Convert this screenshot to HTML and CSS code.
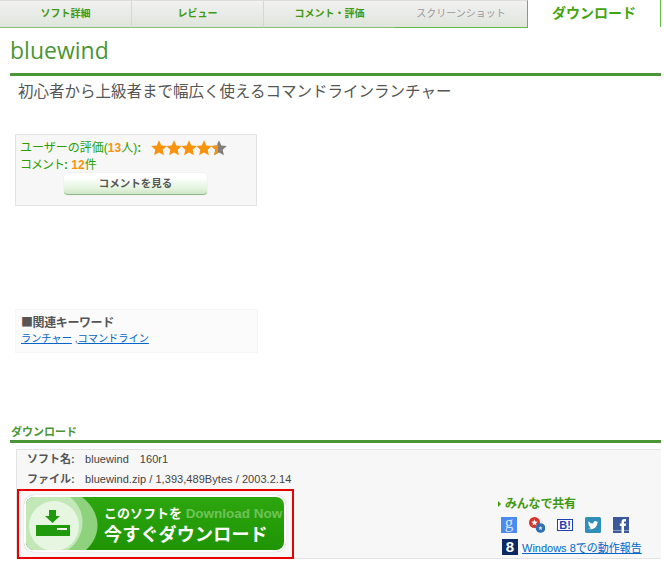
FILE: index.html
```html
<!DOCTYPE html>
<html lang="ja">
<head>
    <meta charset="UTF-8">
    <meta name="viewport" content="width=device-width, initial-scale=1.0">
    <title>bluewind - ダウンロード</title>
    <link rel="stylesheet" href="styles.css">
</head>
<body>
    <!-- Tabs -->
    <nav class="tabs">
        <a class="tab" href="#">ソフト詳細</a>
        <a class="tab" href="#">レビュー</a>
        <a class="tab" href="#">コメント・評価</a>
        <a class="tab tab-off" href="#">スクリーンショット</a>
        <a class="tab tab-active" href="#">ダウンロード</a>
    </nav>

    <main class="content">
        <h1 class="soft-name">bluewind</h1>
        <h2 class="soft-lead">初心者から上級者まで幅広く使えるコマンドラインランチャー</h2>

        <!-- Rating -->
        <section class="rating-box">
            <div class="rating-row">
                <span class="rating-label">ユーザーの評価(<b class="num">13</b>人)<b>:</b></span>
                <svg class="stars" width="76" height="16" viewBox="0 0 76 16">
                    <defs>
                        <polygon id="star" points="8,0.3 10.3,5.4 15.8,6 11.7,9.7 12.9,15.2 8,12.4 3.1,15.2 4.3,9.7 0.2,6 5.7,5.4"/>
                        <clipPath id="half"><rect x="60" y="0" width="7" height="16"/></clipPath>
                    </defs>
                    <use href="#star" fill="#f9930e"/>
                    <use href="#star" x="15" fill="#f9930e"/>
                    <use href="#star" x="30" fill="#f9930e"/>
                    <use href="#star" x="45" fill="#f9930e"/>
                    <use href="#star" x="60" fill="#808080"/>
                    <g clip-path="url(#half)"><use href="#star" x="60" fill="#f9930e"/></g>
                </svg>
            </div>
            <div class="comment-row"><span class="comment-word">コメント</span><b>:</b> <b class="num">12</b>件</div>
            <a class="comment-btn" href="#">コメントを見る</a>
        </section>

        <!-- Keywords -->
        <section class="keyword-box">
            <div class="keyword-title">■関連キーワード</div>
            <div class="keyword-links"><a href="#">ランチャー</a> ,<a href="#">コマンドライン</a></div>
        </section>

        <!-- Download -->
        <h3 class="dl-title">ダウンロード</h3>
        <section class="dl-box">
            <dl class="dl-info">
                <div class="dl-row"><dt>ソフト名:</dt><dd>bluewind　160r1</dd></div>
                <div class="dl-row"><dt>ファイル:</dt><dd>bluewind.zip / 1,393,489Bytes / 2003.2.14</dd></div>
            </dl>
            <div class="dl-bottom">
                <a class="dl-frame" href="#">
                    <span class="dl-btn">
                        <span class="dl-inner">
                            <svg class="dl-art" width="78" height="53" viewBox="0 0 78 53">
                                <path d="M0 0H56C76 16 76 38 60 53H0Z" fill="#8fd27d"/>
                                <path d="M0 0H44C62 14 60 40 42 53H0Z" fill="#c2e8b8"/>
                                <circle cx="28" cy="29" r="25" fill="#e6f6e1"/>
                                <path d="M23 13H30V19H34L26.5 26L19 19H23Z" fill="#1f9a0c"/>
                                <path d="M10 28H44V39H10Z" fill="#1f9a0c"/>
                                <path d="M31 31H41V33H31Z" fill="#fff"/>
                            </svg>
                            <span class="dl-text">
                                <span class="dl-line1">このソフトを <em>Download Now</em></span>
                                <span class="dl-line2">今すぐダウンロード</span>
                            </span>
                        </span>
                    </span>
                </a>
                <div class="share">
                    <div class="share-title">みんなで共有</div>
                    <div class="share-icons">
                        <svg width="16" height="16" viewBox="0 0 16 16"><rect width="16" height="16" fill="#4b8bf0"/><text class="icon-g" x="8" y="11" text-anchor="middle">g</text></svg>
                        <svg width="16" height="16" viewBox="0 0 16 16"><circle cx="5.5" cy="5.5" r="5.5" fill="#d8342c"/><circle cx="11.5" cy="11" r="4.8" fill="#2f6fb3"/><path d="M5.5 2.3L6.4 4.5 8.7 4.7 7 6.2 7.5 8.5 5.5 7.3 3.5 8.5 4 6.2 2.3 4.7 4.6 4.5Z" fill="#fff"/><path d="M11.5 8.8L12.1 10.3 13.7 10.4 12.5 11.4 12.9 13 11.5 12.2 10.1 13 10.5 11.4 9.3 10.4 10.9 10.3Z" fill="#d5e4f3"/></svg>
                        <svg width="16" height="16" viewBox="0 0 16 16"><rect x="0.5" y="2.5" width="15" height="11" fill="#fff" stroke="#1f40b8"/><text class="icon-b" x="8" y="12" text-anchor="middle">B!</text></svg>
                        <svg width="16" height="16" viewBox="0 0 16 16"><rect width="16" height="16" rx="1.5" fill="#2f8fb8"/><path d="M2.5 11.5C6.5 13.5 12 11.5 12.3 6L13.5 4.6 12 5C11 3.3 8 4 8.3 6.6C6.5 6.5 4.8 5.6 3.6 4.2C3 5.5 3.4 6.8 4.4 7.5L3.4 7.3C3.5 8.5 4.3 9.3 5.4 9.6L4.4 9.7C4.8 10.5 5.5 10.9 6.4 11C5.5 11.6 4 11.8 2.5 11.5Z" fill="#fff"/></svg>
                        <svg width="16" height="16" viewBox="0 0 16 16"><rect width="16" height="16" fill="#3b5998"/><rect y="13" width="16" height="1" fill="#8b9dc3"/><path d="M8.5 16V9H6.8V6.6H8.5V5C8.5 3 9.6 2 11.2 2H13V4.4H11.9C11.2 4.4 11 4.8 11 5.3V6.6H13L12.7 9H11V16Z" fill="#fff"/></svg>
                    </div>
                    <div class="win8">
                        <span class="win8-badge">8</span>
                        <a href="#">Windows 8での動作報告</a>
                    </div>
                </div>
            </div>
        </section>
    </main>
</body>
</html>
```

FILE: styles.css
```css
body {
    margin: 0;
    width: 664px;
    height: 571px;
    overflow: hidden;
    background: #fff;
    color: #555;
    font-family: "Liberation Sans", "Noto Sans CJK JP", sans-serif;
    font-size: 12px;
}

a {
    color: #0066cc;
}

/* Tabs */
.tabs {
    display: flex;
    width: 661px;
    height: 28px;
}

.tab {
    width: 132px;
    box-sizing: border-box;
    height: 28px;
    line-height: 26px;
    text-align: center;
    font-size: 10px;
    font-weight: bold;
    color: #3f9a10;
    text-decoration: none;
    background: linear-gradient(#f1f1f1, #dfe5dc);
    border-top: 1px solid #ddd;
    border-right: 1px solid #d6d6d6;
    border-bottom: 1px solid #84bf74;
}

.tab-off {
    width: 133px;
    margin-left: -1px;
    color: #999;
    font-weight: normal;
    border-right: 1px solid #5fbb45;
    border-bottom: 1px solid #5fbb45;
}

.tab-active {
    width: 133px;
    height: 27px;
    background: #fff;
    font-size: 14px;
    color: #44a410;
    border: none;
    border-right: 1px solid #5fbb45;
}

/* Content */
.content {
    width: 651px;
    margin-left: 10px;
}

.soft-name {
    margin: 0;
    height: 48px;
    box-sizing: border-box;
    border-bottom: 3px solid #4a9636;
    padding-top: 6px;
    font-family: "Open Sans", sans-serif;
    font-size: 23px;
    line-height: 32px;
    font-weight: normal;
    color: #4a9636;
}

.soft-lead {
    margin: 6px 0 0 8px;
    font-size: 15.5px;
    line-height: 20px;
    font-weight: normal;
    color: #555;
}

.rating-box {
    width: 240px;
    height: 70px;
    margin: 32px 0 0 5px;
    background: #f7f7f7;
    border: 1px solid #e3e3e3;
    color: #2aa000;
}

.rating-row {
    display: flex;
    height: 16px;
    margin: 5px 0 0 4px;
    line-height: 16px;
}

.num {
    color: #f9930e;
}

.stars {
    margin-left: 10px;
}

.comment-row {
    margin: 1px 0 0 4px;
    height: 16px;
    line-height: 16px;
}

.comment-word {
    letter-spacing: -1px;
}

.comment-btn {
    display: block;
    width: 143px;
    height: 22px;
    box-sizing: border-box;
    margin: 0 0 0 48px;
    border-radius: 4px;
    border-bottom: 1px solid #8fb98a;
    background: linear-gradient(#fff 25%, #e3f3dc 75%, #cfe6c8);
    box-shadow: 0 0 1px #ccc;
    text-align: center;
    line-height: 21px;
    font-size: 10.5px;
    font-weight: bold;
    color: #555;
    text-decoration: none;
}

.keyword-box {
    width: 236px;
    height: 42px;
    margin: 103px 0 0 5px;
    padding-left: 5px;
    background: #fbfbfb;
    border: 1px solid #f5f5f5;
}

.keyword-title {
    margin-top: 4px;
    line-height: 16px;
    font-family: "Noto Sans CJK JP", sans-serif;
    font-weight: bold;
    letter-spacing: -0.4px;
    color: #555;
}

.keyword-links {
    margin-top: 2px;
    line-height: 14px;
    font-size: 10.2px;
}

.dl-title {
    margin: 69px 0 0;
    padding-left: 1px;
    height: 18px;
    line-height: 20px;
    font-size: 11px;
    font-weight: bold;
    color: #4a9636;
    border-bottom: 3px solid #4a9636;
}

.dl-box {
    margin: 6px 0 0 6px;
    height: 110px;
    box-sizing: border-box;
    background: #f7f7f7;
    border: 1px solid #e3e3e3;
    border-right: none;
}

.dl-info {
    margin: 0;
    padding-left: 10px;
    height: 39px;
}

.dl-row {
    display: flex;
    height: 19px;
    line-height: 19px;
}

.dl-row + .dl-row {
    margin-top: 1px;
}

.dl-row dt {
    width: 58px;
    font-size: 11px;
    font-weight: bold;
    color: #555;
}

.dl-row dd {
    margin: 0;
    color: #444;
    font-size: 11px;
    letter-spacing: 0.05px;
    white-space: pre;
}

.dl-bottom {
    display: flex;
}

.dl-frame {
    display: block;
    box-sizing: border-box;
    flex: none;
    width: 277px;
    height: 70px;
    border: 2px solid #e60000;
    padding: 4px 6px 0 5px;
    text-decoration: none;
}

.dl-btn {
    display: block;
    box-sizing: border-box;
    width: 262px;
    height: 57px;
    padding: 2px;
    border-radius: 10px;
    background: #fff;
    box-shadow: 0 0 1px #aaa;
}

.dl-inner {
    display: flex;
    height: 53px;
    overflow: hidden;
    border-radius: 8px;
    background: linear-gradient(#2ca60e, #1f9405);
}

.dl-art {
    flex: none;
}

.dl-text {
    display: flex;
    flex-direction: column;
    color: #fff;
    font-weight: bold;
}

.dl-line1 {
    margin-top: 8px;
    font-size: 13px;
    line-height: 17px;
    white-space: nowrap;
}

.dl-line1 em {
    font-style: normal;
    font-size: 13.5px;
    color: #6ec35a;
}

.dl-line2 {
    margin-top: 1px;
    font-size: 18px;
    letter-spacing: 0.2px;
    line-height: 24px;
    white-space: nowrap;
}

.share {
    margin: 7px 0 0 204px;
}

.share-title {
    position: relative;
    height: 16px;
    line-height: 16px;
    padding-left: 7px;
    font-weight: bold;
    letter-spacing: -0.2px;
    color: #3f9a10;
}

.share-title::before {
    content: "";
    position: absolute;
    left: 0;
    top: 5px;
    border-left: 3px solid #3f9a10;
    border-top: 3px solid transparent;
    border-bottom: 3px solid transparent;
}

.share-icons {
    display: flex;
    gap: 12px;
    margin: 5px 0 0 3px;
}

.share-icons svg {
    display: block;
}

.icon-g {
    font-family: "Liberation Serif", serif;
    font-size: 17px;
    fill: #d5e4fb;
}

.icon-b {
    font-family: "Liberation Sans", sans-serif;
    font-size: 11px;
    font-weight: bold;
    fill: #1f40b8;
}

.win8 {
    display: flex;
    align-items: center;
    gap: 4px;
    margin: 6px 0 0 4px;
    font-size: 11px;
    white-space: nowrap;
}

.win8-badge {
    display: block;
    width: 16px;
    height: 16px;
    background: #0b2a63;
    color: #fff;
    font-size: 15px;
    line-height: 16px;
    font-weight: bold;
    text-align: center;
}
```
